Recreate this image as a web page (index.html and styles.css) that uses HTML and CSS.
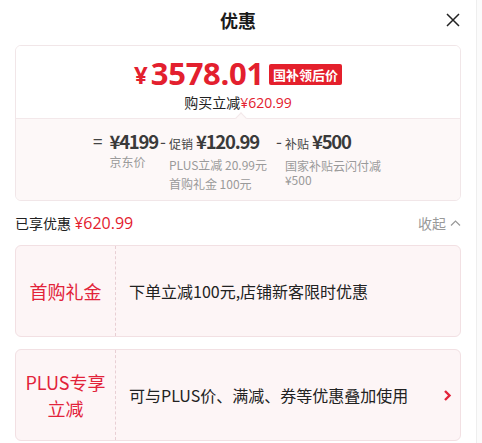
FILE: index.html
```html
<!DOCTYPE html>
<html lang="zh">
<head>
<meta charset="utf-8">
<link rel="stylesheet" href="styles.css">
</head>
<body>
<div class="page">
  <div class="panel">
    <div class="head">
      <div class="title">优惠</div>
      <svg class="close" width="16" height="16" viewBox="0 0 16 16"><path d="M2 2L14 14M14 2L2 14" stroke="#222" stroke-width="1.5" fill="none"/></svg>
    </div>

    <div class="summary">
      <div class="sum-top">
        <div class="price-line">
          <span class="yen">¥</span><span class="price">3578.01</span><span class="badge">国补领后价</span>
        </div>
        <div class="save">购买立减<span class="red num">¥620.99</span></div>
      </div>
      <div class="sum-bottom">
        <span class="notch"></span>
        <div class="calc">
          <div class="op op1">=</div>
          <div class="col c1">
            <div class="amt">¥4199</div>
            <div class="lbl">京东价</div>
          </div>
          <div class="op">-</div>
          <div class="col c2">
            <div class="amt"><span class="tag">促销</span>¥120.99</div>
            <div class="lbl">PLUS立减 20.99元</div>
            <div class="lbl">首购礼金 100元</div>
          </div>
          <div class="op op3">-</div>
          <div class="col c3">
            <div class="amt"><span class="tag">补贴</span>¥500</div>
            <div class="lbl wrap">国家补贴云闪付减¥500</div>
          </div>
        </div>
      </div>
    </div>

    <div class="enjoy">
      <div>已享优惠 <span class="red num big">¥620.99</span></div>
      <div class="fold">收起 <svg width="11" height="8" viewBox="0 0 11 8"><path d="M1 6.5L5.5 2L10 6.5" stroke="#999" stroke-width="1.2" fill="none"/></svg></div>
    </div>

    <div class="item">
      <div class="item-name">首购礼金</div>
      <div class="item-desc">下单立减100元,店铺新客限时优惠</div>
    </div>
    <div class="item">
      <div class="item-name">PLUS专享<br>立减</div>
      <div class="item-desc">可与PLUS价、满减、券等优惠叠加使用</div>
      <svg class="chev" width="9" height="13" viewBox="0 0 9 13"><path d="M2 2L6.5 6.5L2 11" stroke="#e2233a" stroke-width="2.4" fill="none"/></svg>
    </div>
  </div>
  <div class="rail"></div>
</div>
</body>
</html>
```

FILE: styles.css
```css
* { box-sizing: border-box; }
html, body { margin: 0; padding: 0; }
body {
  font-family: "Noto Sans CJK SC", "Noto Sans", sans-serif;
  color: #222;
  background: #fff;
  width: 482px;
  height: 443px;
  overflow: hidden;
}
.page { display: flex; height: 443px; }
.panel { width: 476px; padding: 0 15px; }
.rail { flex: 1; border-left: 1px solid #eee; background: #fbfbfb; }

.head {
  position: relative;
  height: 45px;
  display: flex;
  align-items: center;
  justify-content: center;
}
.title { font-size: 18px; font-weight: 700; line-height: 1; margin-top: -6px; color: #1a1a1a; }
.close { position: absolute; right: 0; top: 12px; }

.summary {
  border: 1px solid #f1e6e8;
  border-radius: 6px;
  overflow: hidden;
}
.sum-top {
  background: #fff;
  height: 72px;
  padding-top: 9px;
  display: flex;
  flex-direction: column;
  align-items: center;
}
.price-line {
  display: flex;
  align-items: center;
  height: 36px;
  line-height: 1;
  color: #e3202e;
  font-family: "Open Sans", "Noto Sans", sans-serif;
  font-weight: 700;
}
.yen { font-size: 24px; margin-top: 4px; margin-right: 3px; }
.price { font-size: 31px; letter-spacing: -0.3px; }
.badge {
  font-family: "Noto Sans CJK SC", sans-serif;
  background: #e4202c;
  color: #fff;
  font-size: 13px;
  font-weight: 700;
  line-height: 21px;
  padding: 0 4px;
  border-radius: 2px;
  margin-left: 5px;
  margin-top: 2px;
}
.save { font-size: 14px; line-height: 18px; color: #222; margin-top: 2px; }
.red { color: #e3202e; }
.num { font-family: "Open Sans", "Noto Sans", sans-serif; }
.big { font-size: 16px; }

.sum-bottom {
  position: relative;
  background: #fdf8f8;
  border-top: 1px solid #f3e8ea;
  height: 82px;
  padding: 11px 0 0 77px;
}
.notch {
  position: absolute;
  left: 221px;
  top: -5px;
  width: 8px;
  height: 8px;
  background: #fdf8f8;
  border-left: 1px solid #f3e8ea;
  border-top: 1px solid #f3e8ea;
  transform: rotate(45deg);
}
.calc { display: flex; align-items: flex-start; color: #333; }
.op { font-size: 17px; line-height: 22px; color: #444; margin-right: 3px; }
.op1 { margin-right: 7px; }
.op3 { margin-left: 5px; }
.col { display: flex; flex-direction: column; margin-right: 4px; }
.c1 { margin-right: 2px; }
.amt {
  font-family: "Noto Sans CJK SC", sans-serif;
  font-weight: 700;
  font-size: 18.5px;
  line-height: 22px;
  letter-spacing: -1.2px;
  color: #3a3a3a;
  white-space: nowrap;
}
.tag { font-size: 12px; font-weight: 400; margin-right: 3px; color: #444; letter-spacing: 0; }
.lbl { font-size: 12px; line-height: 18px; color: #9a9a9a; white-space: nowrap; margin-top: 1px; }
.c2 .lbl + .lbl { margin-top: 1px; }
.c3 { width: 100px; }
.lbl.wrap { white-space: normal; line-height: 14px; margin-top: 4px; word-break: break-all; }

.enjoy {
  display: flex;
  justify-content: space-between;
  align-items: center;
  height: 44px;
  font-size: 14px;
  color: #222;
}
.fold { color: #999; display: flex; align-items: center; gap: 4px; }

.item {
  display: flex;
  align-items: stretch;
  background: #fdf5f6;
  border: 1px solid #f2e0e3;
  border-radius: 6px;
  height: 92px;
  margin-bottom: 12px;
  position: relative;
}
.item-name {
  width: 100px;
  border-right: 1px dashed #e8cfd4;
  color: #e2233a;
  font-size: 18px;
  line-height: 26px;
  display: flex;
  align-items: center;
  justify-content: center;
  text-align: center;
}
.item-desc {
  flex: 1;
  display: flex;
  align-items: center;
  padding-left: 13px;
  font-size: 16px;
  color: #222;
}
.chev { position: absolute; right: 8px; top: 50%; margin-top: -6.5px; }
```
